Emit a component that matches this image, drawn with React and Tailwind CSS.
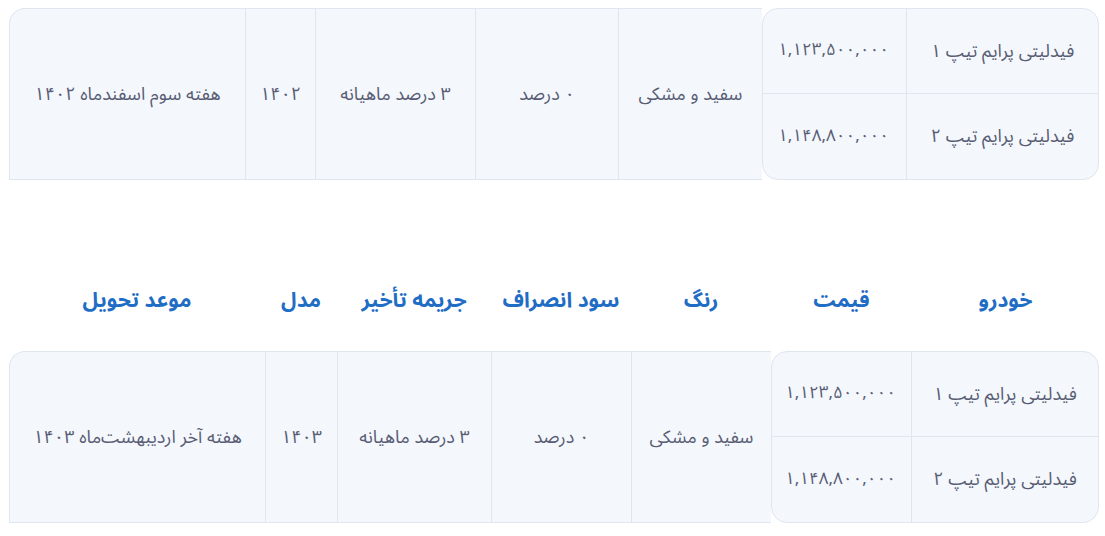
import React from "react";

const tables = [
  {
    cars: [
      { name: "فیدلیتی پرایم تیپ ۱", price: "۱,۱۲۳,۵۰۰,۰۰۰" },
      { name: "فیدلیتی پرایم تیپ ۲", price: "۱,۱۴۸,۸۰۰,۰۰۰" },
    ],
    color: "سفید و مشکی",
    profit: "۰ درصد",
    penalty: "۳ درصد ماهیانه",
    model: "۱۴۰۲",
    delivery: "هفته سوم اسفندماه ۱۴۰۲",
    w: {
      box: "w-[337px] grid-cols-[192px_145px]",
      color: "w-[144px]",
      profit: "w-[143px]",
      penalty: "w-[160px]",
      model: "w-[70px]",
      delivery: "w-[236px]",
    },
  },
  {
    cars: [
      { name: "فیدلیتی پرایم تیپ ۱", price: "۱,۱۲۳,۵۰۰,۰۰۰" },
      { name: "فیدلیتی پرایم تیپ ۲", price: "۱,۱۴۸,۸۰۰,۰۰۰" },
    ],
    color: "سفید و مشکی",
    profit: "۰ درصد",
    penalty: "۳ درصد ماهیانه",
    model: "۱۴۰۳",
    delivery: "هفته آخر اردیبهشت‌ماه ۱۴۰۳",
    w: {
      box: "w-[328px] grid-cols-[187px_141px]",
      color: "w-[140px]",
      profit: "w-[140px]",
      penalty: "w-[154px]",
      model: "w-[72px]",
      delivery: "w-[256px]",
    },
  },
];

const headers = [
  { label: "خودرو", w: "w-[187px]" },
  { label: "قیمت", w: "w-[141px]" },
  { label: "رنگ", w: "w-[140px]" },
  { label: "سود انصراف", w: "w-[140px]" },
  { label: "جریمه تأخیر", w: "w-[154px]" },
  { label: "مدل", w: "w-[72px]" },
  { label: "موعد تحویل", w: "w-[256px]" },
];

const Cell = ({ className, children }) => (
  <div
    className={`shrink-0 flex items-center justify-center whitespace-nowrap border-y border-l border-[#dfe6f0] bg-[#f4f7fc] ${className}`}
  >
    {children}
  </div>
);

const PriceTable = ({ t }) => (
  <div dir="rtl" className="flex h-[172px] text-[18px] text-[#585d74]">
    <div
      className={`shrink-0 grid grid-rows-2 rounded-2xl border border-[#dfe6f0] bg-[#f4f7fc] overflow-hidden ${t.w.box}`}
    >
      {t.cars.map((c, i) => (
        <React.Fragment key={i}>
          <div
            className={`flex items-center justify-center whitespace-nowrap border-l border-[#dfe6f0] ${
              i === 0 ? "border-b" : ""
            }`}
          >
            {c.name}
          </div>
          <div
            className={`flex items-center justify-center whitespace-nowrap text-[17px] border-[#dfe6f0] ${
              i === 0 ? "border-b" : ""
            }`}
          >
            {c.price}
          </div>
        </React.Fragment>
      ))}
    </div>
    <Cell className={t.w.color}>{t.color}</Cell>
    <Cell className={t.w.profit}>{t.profit}</Cell>
    <Cell className={t.w.penalty}>{t.penalty}</Cell>
    <Cell className={t.w.model}>{t.model}</Cell>
    <Cell className={`${t.w.delivery} rounded-tl-2xl`}>{t.delivery}</Cell>
  </div>
);

export default function App() {
  return (
    <div className="min-h-screen bg-white pt-2 pl-[9px] font-['Noto_Sans_Arabic','DejaVu_Sans',sans-serif]">
      <div className="w-[1090px]">
        <PriceTable t={tables[0]} />

        <div
          dir="rtl"
          className="mt-[96px] flex h-[50px] items-center text-[21px] font-bold text-[#1f6dc4]"
        >
          {headers.map((h) => (
            <div key={h.label} className={`shrink-0 text-center ${h.w}`}>
              {h.label}
            </div>
          ))}
        </div>

        <div className="mt-[25px]">
          <PriceTable t={tables[1]} />
        </div>
      </div>
    </div>
  );
}
